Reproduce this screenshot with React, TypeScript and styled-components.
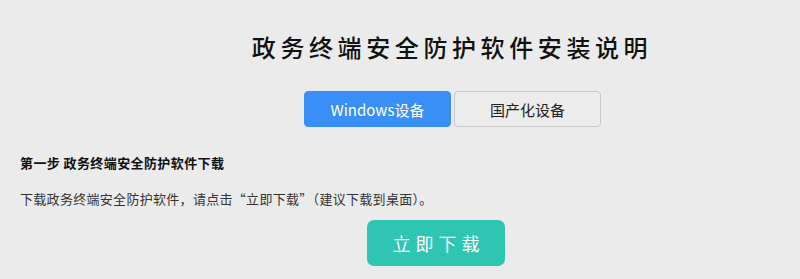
import React, { useState } from "react";
import styled, { createGlobalStyle } from "styled-components";

const Global = createGlobalStyle`
  html, body { margin: 0; padding: 0; background: #ebebeb; }
  body { font-family: "Noto Sans CJK SC", "Noto Sans", sans-serif; color: #222; }
`;

const Page = styled.div`
  width: 800px;
  height: 279px;
  overflow: hidden;
  display: flex;
  flex-direction: column;
  box-sizing: border-box;
  padding-top: 30px;
`;

const Title = styled.h1`
  margin: 0;
  padding-left: 104px;
  text-align: center;
  font-size: 24px;
  line-height: 34px;
  font-weight: 500;
  letter-spacing: 4.6px;
  color: #111;
`;

const Tabs = styled.div`
  display: flex;
  gap: 3px;
  margin: 27px 0 0 304px;
`;

const Tab = styled.button<{ $active: boolean }>`
  width: 147px;
  height: 36px;
  box-sizing: border-box;
  border-radius: 4px;
  border: 1px solid ${(p) => (p.$active ? "#3a8ff7" : "#c9c9c9")};
  background: ${(p) => (p.$active ? "#3a8ff7" : "#ececec")};
  color: ${(p) => (p.$active ? "#fff" : "#222")};
  font-family: "Noto Sans CJK SC", "Noto Sans", sans-serif;
  font-size: 15px;
  padding: 0;
  cursor: pointer;
`;

const Section = styled.div`
  display: flex;
  flex-direction: column;
  padding-left: 20px;
`;

const StepTitle = styled.div`
  margin-top: 27px;
  font-size: 13px;
  line-height: 18px;
  font-weight: 700;
  letter-spacing: 0.4px;
  color: #111;
`;

const StepText = styled.div`
  margin-top: 18px;
  font-size: 13px;
  line-height: 18px;
  letter-spacing: 0.3px;
  color: #333;
`;

const Download = styled.button`
  margin: 12px 0 0 347px;
  width: 138px;
  height: 46px;
  border: none;
  border-radius: 7px;
  background: #2ec5b3;
  color: #fff;
  font-family: "Noto Sans CJK SC", "Noto Sans", sans-serif;
  font-size: 18px;
  letter-spacing: 5px;
  padding: 0 0 0 5px;
  cursor: pointer;
`;

export default function App() {
  const [tab, setTab] = useState(0);
  return (
    <Page>
      <Global />
      <Title>政务终端安全防护软件安装说明</Title>
      <Tabs>
        <Tab $active={tab === 0} onClick={() => setTab(0)}>Windows设备</Tab>
        <Tab $active={tab === 1} onClick={() => setTab(1)}>国产化设备</Tab>
      </Tabs>
      <Section>
        <StepTitle>第一步 政务终端安全防护软件下载</StepTitle>
        <StepText>下载政务终端安全防护软件，请点击“立即下载”（建议下载到桌面）。</StepText>
        <Download>立即下载</Download>
      </Section>
    </Page>
  );
}
